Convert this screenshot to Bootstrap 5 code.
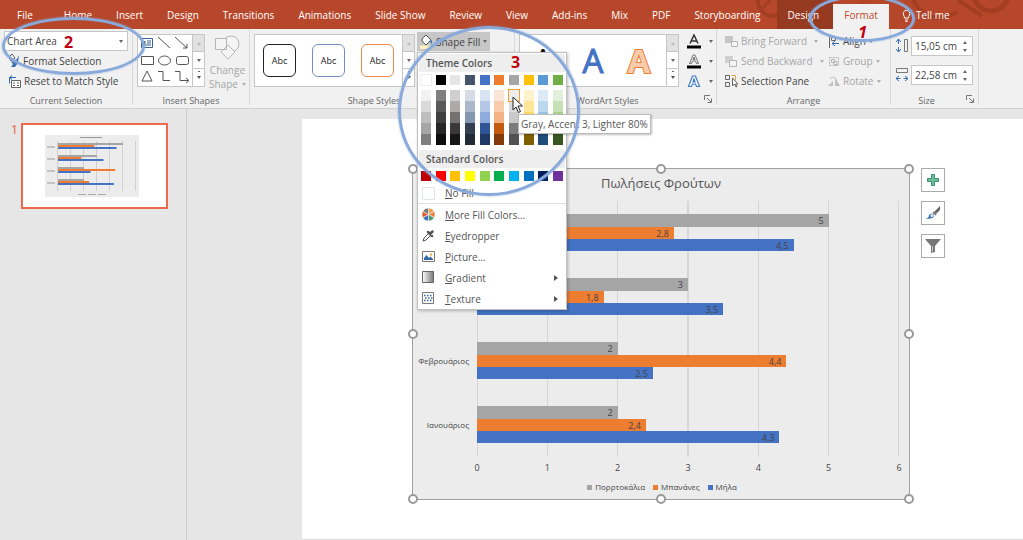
<!DOCTYPE html>
<html lang="en">
<head>
<meta charset="utf-8">
<meta name="viewport" content="width=device-width, initial-scale=1">
<title>Chart formatting</title>
<link href="https://cdn.jsdelivr.net/npm/bootstrap@5.3.0/dist/css/bootstrap.min.css" rel="stylesheet">
<style>
body{font-family:"Open Sans","Noto Sans",sans-serif;font-size:10px;line-height:20px;color:#444;background:#e6e6e6;overflow:hidden}
svg{display:block;flex:none}
button,select,input{font:inherit;color:inherit}
.tabbar{height:29px;background:#b7472a;position:relative}
.tabbar .nav-link{color:#fff;padding:5px 12px 4px;font-size:10px;line-height:20px;white-space:nowrap}
.tabbar .nav{position:relative}
.tabbar .tab-file{padding-left:17px;padding-right:19px}
.tabbar .tab-ctx{background:#973a22;padding-left:11px;padding-right:14px;margin-left:4px}
.tabbar .nav-link.active{background:#f1f1f1;color:#c0492b;margin-top:4px;padding:1px 11px 4px}
.pattern{position:absolute;right:0;top:0}
.ribbon{background:#f1f1f1;border-bottom:1px solid #d2d2d2;height:80px}
.rgroup{position:relative;border-right:1px solid #d9d9d9;padding-top:2px;margin-bottom:4px;height:76px}
.rgroup .body{height:62px}
.caption{font-size:9px;line-height:16px;color:#666;text-align:center}
.w-sel{width:133px}.w-ins{width:117px}.w-sty{width:265px}.w-art{width:202px}.w-arr{width:174px}.w-siz{width:88px}
.arr-col{width:107px}
.cmd{display:flex;align-items:center;border:0;background:none;padding:0;height:20px;gap:3px;color:#444;white-space:nowrap}
.cmd.off{color:#a6a6a6}
.caret{width:0;height:0;border:2px solid transparent;border-top:3px solid #666;border-bottom:0;flex:none}
.off .caret{border-top-color:#b0b0b0}
.combo{position:relative;width:124px}
.combo select{display:block;appearance:none;width:100%;height:20px;border:1px solid #c6c6c6;background:#fff;padding:0 2px;border-radius:0;line-height:18px}
.combo .caret{position:absolute;right:5px;top:9px}
.gallery{display:flex;border:1px solid #c6c6c6;background:#fff;height:53px;margin-top:3px}
.gscroll{width:12px;display:grid;grid-template-rows:repeat(3,1fr);border-left:1px solid #c6c6c6}
.gscroll button{border:0;border-bottom:1px solid #c6c6c6;background:#fff;padding:0;display:grid;place-items:center}
.gscroll button:first-child{background:#e1e1e1}
.gscroll button:last-child{border-bottom:0}
.gscroll .up{transform:rotate(180deg);border-top-color:#bbb}
.gscroll .more{border-top-color:#555;box-shadow:0 -5px 0 -1px #fff,0 -6px 0 -1px #666}
.abc{width:33px;height:33px;border:1px solid #222;border-radius:6px;background:#fff;font-size:9px;color:#222;padding:0}
.abc.b{border-color:#6f8fc4}.abc.o{border-color:#ec8a50}
.wa-row{padding:0 12px 0 8px}
.wa{border:0;background:none;padding:0;font-size:33px;line-height:50px;width:30px}
.wa.k{color:#111}.wa.b{color:#4472c4;-webkit-text-stroke:1px #4472c4}.wa.o{color:#f8cbad;-webkit-text-stroke:2px #ed7d31;font-weight:700;paint-order:stroke}
.fillbtn{background:#c6c6c6;width:73px;height:19px;padding:0 3px;gap:3px}
.fillwrap{position:relative;margin:1px 0 0 2px}
.fillmenu{position:absolute;left:0;top:20px;width:150px;z-index:5;background:#fff;border:1px solid #c0c0c0;box-shadow:1px 1px 3px rgba(0,0,0,.25);padding:1px 0 0}
.fillmenu h6{font-size:10px;line-height:18px;font-weight:600;color:#555;background:#eee;margin:0 1px;padding-left:7px}
.fillmenu .h-std{margin-top:5px}
.sw{display:flex;justify-content:space-between;padding:0 3px}
.sw button{border:0;padding:0;width:10px;height:10px;display:block}
.sw .pale{box-shadow:0 0 0 1px #eee}
.sw .shade button{height:11px}
.sw .hot{outline:1px solid #f0a030}
.swbase{margin:3px 0 5px}
.swstd{margin:3px 0 2px}
.mi{display:flex;align-items:center;width:100%;border:0;background:none;height:21px;padding:0 8px 0 4px;color:#555;text-align:left}
.mi svg{margin-right:10px}
.mi u{text-underline-offset:1px}
.mi .arr{margin-left:auto;border:3px solid transparent;border-left:4px solid #555;border-right:0}
.tip{position:absolute;left:101px;top:82px;z-index:6;background:#fff;border:1px solid #bbb;box-shadow:1px 1px 2px rgba(0,0,0,.25);padding:0 2px;line-height:18px;white-space:nowrap;color:#555}
.cursor{position:absolute;left:95px;top:64px;z-index:7}
.ring{position:absolute;border:3px solid #88a9da;border-radius:50%;box-shadow:0 0 2px #88a9da;pointer-events:none;z-index:8}
.ring-sel{left:2px;top:-12px;width:143px;height:58px}
.ring-fill{left:-19px;top:-6px;width:182px;height:170px}
.ring-tab{left:-24px;top:-5px;width:106px;height:47px}
.num{position:absolute;color:#c00010;font-weight:700;font-size:16px;line-height:20px;z-index:9}
.num-sel{left:64px;top:3px}.num-fill{left:94px;top:20px}.num-tab{left:25px;top:22px;font-style:italic}
.dim{position:relative;gap:2px;width:78px}
.dim input{width:62px;height:20px;border:1px solid #c6c6c6;background:#fff;padding:0 3px;border-radius:0}
.spin{position:absolute;right:6px;top:5px;display:grid;gap:5px}
.spin .up{transform:rotate(180deg)}
.launch{position:absolute;right:4px;bottom:0;border:0;background:none;padding:0}
.side{width:187px;border-right:1px solid #cbcbcb;padding:14px 0 0 11px}
.side .no{color:#e0593a;font-size:12px;line-height:14px;width:10px}
.thumb{width:147px;height:86px;border:2px solid #ee6a4c;background:#fff;display:grid;place-items:center;padding-right:6px}
.slide{margin:10px 0 1px 115px;background:#fff;padding:49px 78px 39px 110px;border-bottom:1px solid #ddd;gap:11px}
.chartbox{position:relative;background:#ececec;border:1px solid #a0a0a0;height:332px;color:#444;font-size:9px}
.chartbox h5{font-size:13px;line-height:29px;margin:0 0 3px;text-align:center;font-weight:400;color:#555}
.cats{width:64px;font-size:8px;text-align:right;padding-right:8px}
.cats div{height:64px;line-height:64px}
.plot{margin-right:10px;height:256px;background:repeating-linear-gradient(90deg,#d6d6d6 0 1px,transparent 1px calc((100% - 1px)/6))}
.cluster{height:64px;padding-top:13px}
.cluster div{height:13px;line-height:13px;text-align:right;padding-right:5px}
.cluster div+div{height:12px}
.s0{background:#a5a5a5}.s1{background:#ed7d31}.s2{background:#4472c4}
.axis{margin:0 4px 0 58px;display:flex;justify-content:space-between;line-height:22px}
.axis span{width:12px;text-align:center}
.legend-row{font-size:8px;line-height:16px;padding-left:2px}
.legend-row i{width:5px;height:5px;margin-right:3px}
.handle{position:absolute;width:10px;height:10px;border:2px solid #999;border-radius:50%;background:#fff;transform:translate(-50%,-50%)}
.tools{width:24px;gap:9px}
.tools button{width:24px;height:24px;border:1px solid #aaa;background:#fff;padding:0;display:grid;place-items:center}
</style>
</head>
<body class="d-flex flex-column min-vh-100">
<header class="tabbar">
<svg class="pattern" width="290" height="29" fill="none" stroke="#96381f" stroke-opacity=".6"><circle cx="40" cy="1" r="15" stroke-width="4"/><path d="M30 8l12-14M78 0l20 15h20l14-12" stroke-width="3"/><circle cx="258" cy="-6" r="17" stroke-width="5"/><path d="M180 0q16 28 44 12M225 0l24 16" stroke-width="4"/></svg>
<nav class="nav flex-nowrap">
<a class="nav-link tab-file" href="#">File</a><a class="nav-link" href="#">Home</a><a class="nav-link" href="#">Insert</a><a class="nav-link" href="#">Design</a><a class="nav-link" href="#">Transitions</a><a class="nav-link" href="#">Animations</a><a class="nav-link" href="#">Slide Show</a><a class="nav-link" href="#">Review</a><a class="nav-link" href="#">View</a><a class="nav-link" href="#">Add-ins</a><a class="nav-link" href="#">Mix</a><a class="nav-link" href="#">PDF</a><a class="nav-link" href="#">Storyboarding</a><a class="nav-link tab-ctx" href="#">Design</a>
<div class="position-relative"><a class="nav-link active" href="#">Format</a><span class="ring ring-tab"></span><span class="num num-tab">1</span></div>
<a class="nav-link d-flex align-items-center gap-1" href="#"><svg width="11" height="13" viewBox="0 0 11 13" fill="none" stroke="#fff"><path d="M3.500 9Q3.500 7.500 2.500 6A3.300 3.300 0 1 1 8.500 6Q7.500 7.500 7.500 9ZM4 11h3M4.500 12.500h2"/></svg>Tell me</a>
</nav>
</header>
<section class="ribbon d-flex">
<div class="rgroup w-sel">
<div class="body ps-1">
<div class="combo"><select aria-label="Chart element"><option>Chart Area</option></select><span class="caret"></span></div>
<button class="cmd ps-1"><svg width="12" height="14" viewBox="0 0 12 14"><path d="M1 3l3-3 3 4-4 3z" fill="#fff" stroke="#555"/><path d="M3 8l6-3 2-4-1 8-3 4H3l2-3z" fill="#3f6fae"/></svg>Format Selection</button>
<button class="cmd ps-1"><svg width="13" height="13" viewBox="0 0 13 13" fill="none"><path d="M3.500 5.500h9v7h-9z" stroke="#666" fill="#fff"/><path d="M5 8h2M9 8h2M5 10.500h2M9 10.500h2" stroke="#666"/><path d="M8 2.500H2M4 .5l-2.500 2L4 4.500M1.500 2.500v6" stroke="#2f6bb0"/></svg>Reset to Match Style</button>
</div>
<div class="caption">Current Selection</div>
<span class="ring ring-sel"></span><span class="num num-sel">2</span>
</div>
<div class="rgroup w-ins">
<div class="body d-flex ps-1">
<div class="gallery"><svg width="54" height="51" fill="none" stroke="#555"><path d="M3.500 3.500h11v9h-11zM9 6h4M9 8h4M5 10h8" stroke="#3b5f8f"/><path d="M5 7.500h2.500" stroke-width="3"/><path d="M20 2l12 11M37 2l12 11M49 9v4h-4M3.500 21.500h12v8h-12zM4 46l5-10 5 10zM20 36.500h5v9h7M37 36.500h5v9h8M48 43l3 2.500-3 2.500"/><ellipse cx="26.500" cy="25.500" rx="6" ry="4.500"/><rect x="38.500" y="21.500" width="12" height="8" rx="2"/></svg><div class="gscroll"><button aria-label="Up"><span class="caret up"></span></button><button aria-label="Down"><span class="caret"></span></button><button aria-label="More"><span class="caret more"></span></button></div></div>
<button class="cmd off d-block h-auto lh-1 ps-1"><svg class="mx-auto mb-1" width="26" height="26" viewBox="0 0 26 26" fill="#f4f4f4" stroke="#b5b5b5"><circle cx="17" cy="9" r="8"/><path d="M1.500 3.500h11v11h-11zM7 17l7-7 7 7-7 7z"/></svg>Change<br><span class="d-flex align-items-center justify-content-center gap-1 pt-1">Shape <span class="caret"></span></span></button>
</div>
<div class="caption">Insert Shapes</div>
</div>
<div class="rgroup w-sty">
<div class="body d-flex ps-1">
<div class="gallery"><div class="d-flex align-items-center justify-content-between px-2"><button class="abc me-3">Abc</button><button class="abc b me-3">Abc</button><button class="abc o">Abc</button></div><div class="gscroll"><button aria-label="Up"><span class="caret up"></span></button><button aria-label="Down"><span class="caret"></span></button><button aria-label="More"><span class="caret more"></span></button></div></div>
<div class="fillwrap">
<button class="cmd fillbtn"><svg width="13" height="15" viewBox="0 0 13 15"><path d="M2 5l4-4 5 5-5 5-4-4z" fill="#fff" stroke="#555"/><path d="M10 5q3 2 1.500 5-1.500-1-1.500-5z" fill="#3f6fae"/><path d="M0 11.500h12V15H0z" fill="#fff2bd"/></svg>Shape Fill<span class="caret"></span></button>
<div class="fillmenu">
<h6>Theme Colors</h6>
<div class="sw swbase" id="base"></div>
<div class="sw" id="shades"></div>
<h6 class="h-std">Standard Colors</h6>
<div class="sw swstd" id="std"></div>
<button class="mi border-bottom"><svg width="13" height="13"><path d="M.5.5h12v12H.5z" fill="#fff" stroke="#dde3e8"/></svg><span><u>N</u>o Fill</span></button>
<button class="mi"><svg width="13" height="13" viewBox="-7 -7 14 14" stroke="#fff" stroke-width=".6"><path d="M0 0L0-7A7 7 0 0 1 6.100-3.500z" fill="#f0a04b"/><path d="M0 0L6.100-3.500A7 7 0 0 1 6.100 3.500z" fill="#e8813a"/><path d="M0 0L6.100 3.500A7 7 0 0 1 0 7z" fill="#4a9a76"/><path d="M0 0L0 7A7 7 0 0 1-6.100 3.500z" fill="#3c70b4"/><path d="M0 0L-6.100 3.500A7 7 0 0 1-6.100-3.500z" fill="#e05a3a"/><path d="M0 0L-6.100-3.500A7 7 0 0 1 0-7z" fill="#777"/></svg><span><u>M</u>ore Fill Colors...</span></button>
<button class="mi"><svg width="13" height="13" viewBox="0 0 13 13"><path d="M1 12l1-3 5-5 2 2-5 5z" fill="#fff" stroke="#555"/><path d="M6 3l4 4M8 5l2.500-2.500" stroke="#555" stroke-width="2.500" stroke-linecap="round"/></svg><span><u>E</u>yedropper</span></button>
<button class="mi"><svg width="13" height="13"><path d="M.5 1.500h12v10H.5z" fill="#fff" stroke="#777"/><path d="M2 10V8l2.500-3L7 8l1.500-1.500L11 9v1z" fill="#3568a8"/><circle cx="9" cy="4.500" r="1.200" fill="#f0b040"/></svg><span><u>P</u>icture...</span></button>
<button class="mi"><svg width="13" height="13"><defs><linearGradient id="g"><stop stop-color="#fff"/><stop offset="1" stop-color="#777"/></linearGradient></defs><path d="M.5.5h11v11H.5z" fill="url(#g)" stroke="#666"/></svg><span><u>G</u>radient</span><span class="arr"></span></button>
<button class="mi"><svg width="13" height="13"><path d="M.5.5h11v11H.5z" fill="#fff" stroke="#777"/><path d="M2 3.500h8M3 6h8M2 8.500h8" stroke="#3568a8" stroke-width="1.500" stroke-dasharray="1.500 1.500"/></svg><span><u>T</u>exture</span><span class="arr"></span></button>
</div>
<div class="tip">Gray, Accent 3, Lighter 80%</div>
<svg class="cursor" width="12" height="18" viewBox="0 0 12 18"><path d="M1 1v13l3-3 2.500 5.500 2-1L6 10h4.500z" fill="#fff" stroke="#222"/></svg>
<span class="ring ring-fill"></span><span class="num num-fill">3</span>
</div>
</div>
<div class="caption pe-3">Shape Styles</div>
</div>
<div class="rgroup w-art">
<div class="body d-flex ps-1 gap-2">
<div class="gallery"><div class="d-flex wa-row gap-3"><button class="wa k">A</button><button class="wa b ms-1">A</button><button class="wa o">A</button></div><div class="gscroll"><button aria-label="Up"><span class="caret up"></span></button><button aria-label="Down"><span class="caret"></span></button><button aria-label="More"><span class="caret more"></span></button></div></div>
<div>
<button class="cmd gap-2" aria-label="Text Fill"><svg width="14" height="15" fill="none" stroke="#333" stroke-width="1.500"><path d="M3 9.500L7 1l4 8.500M4.500 7h5"/><path d="M0 13h14" stroke="#000" stroke-width="3"/></svg><span class="caret"></span></button>
<button class="cmd gap-2" aria-label="Text Outline"><svg width="14" height="15" fill="none" stroke="#777"><path d="M2.500 9.500L6 1h2l3.500 8.500h-2l-1-2.500h-3l-1 2.500zM6 5.500h2L7 3z"/><path d="M0 13h14" stroke="#000" stroke-width="3"/></svg><span class="caret"></span></button>
<button class="cmd gap-2" aria-label="Text Effects"><svg width="14" height="15" fill="#fff" stroke="#3f7cc4" stroke-width="1.200"><path d="M1.500 12.500L5.500 2h3l4 10.500h-3l-1-2.500h-3l-1 2.500zM6 8h2L7 5z"/></svg><span class="caret"></span></button>
</div>
</div>
<div class="caption pe-3">WordArt Styles</div>
<button class="launch" aria-label="WordArt options"><svg width="8" height="12" fill="none" stroke="#777"><path d="M.5 7V2.500H6M3 5l4 4M7.500 5.500v4h-4"/></svg></button>
</div>
<div class="rgroup w-arr">
<div class="body d-flex ps-1">
<div class="arr-col ps-1">
<button class="cmd off"><svg width="13" height="13"><path d="M0 1h8v7H0z" fill="#c6c6c6"/><path d="M6.500 6.500h6v5h-6z" fill="#f4f4f4" stroke="#b5b5b5"/></svg>Bring Forward<span class="caret ms-1"></span></button>
<button class="cmd off"><svg width="13" height="13"><path d="M0 1h8v7H0z" fill="#d0d0d0"/><path d="M4.500 5.500h7v6h-7z" fill="#f4f4f4" stroke="#b5b5b5"/></svg>Send Backward<span class="caret ms-1"></span></button>
<button class="cmd"><svg width="13" height="14" fill="none" stroke="#666"><path d="M.5 1.500h4v4h-4zM.5 8.500h4v4h-4z"/><path d="M6.500 1.500h4v5" stroke="#e5a44c"/><path d="M7.500 4v8l2-2 1.500 3 1-.5-1.500-2.500H13z" fill="#fff"/></svg>Selection Pane</button>
</div>
<div>
<button class="cmd"><svg width="12" height="13" fill="none" stroke="#666"><path d="M1.500 0v13M3.500 2.500h4v3h-4z"/><path d="M11 8.500H5M7 6l-3 2.500L7 11" stroke="#2f6bb0"/></svg>Align<span class="caret"></span></button>
<button class="cmd off"><svg width="12" height="13" fill="none" stroke="#b0b0b0"><path d="M1.500 2.500h9v8h-9z" stroke-dasharray="2 1"/><path d="M3.500 4.500h3v3h-3zM6 6.500h3v3H6z"/></svg>Group<span class="caret"></span></button>
<button class="cmd off"><svg width="12" height="13" fill="#c0c0c0"><path d="M0 11l5-5v5zM7 2v9h5z"/><path d="M2 4q2-3 5-1" fill="none" stroke="#c0c0c0"/></svg>Rotate<span class="caret"></span></button>
</div>
</div>
<div class="caption">Arrange</div>
</div>
<div class="rgroup w-siz">
<div class="body d-grid ps-1 pb-1 align-content-around">
<label class="dim d-flex align-items-center"><svg width="14" height="15" fill="none" stroke="#2f6bb0"><path d="M3.500 1v13M1 4l2.500-3L6 4M1 11l2.500 3L6 11"/><path d="M2 7.500h3" stroke="#f1f1f1" stroke-width="3"/><path d="M9.500 1.500h3v12h-3z" stroke="#777"/></svg><input aria-label="Height" value="15,05 cm"><span class="spin"><span class="caret up"></span><span class="caret"></span></span></label>
<label class="dim d-flex align-items-center"><svg width="14" height="15" fill="none" stroke="#2f6bb0"><path d="M1 11.500h12M4 9l-3 2.500L4 14M10 9l3 2.500-3 2.500"/><path d="M7 10v3" stroke="#f1f1f1" stroke-width="3"/><path d="M1.500 1.500h11v4h-11z" stroke="#777"/></svg><input aria-label="Width" value="22,58 cm"><span class="spin"><span class="caret up"></span><span class="caret"></span></span></label>
</div>
<div class="caption pe-3">Size</div>
<button class="launch" aria-label="Size options"><svg width="8" height="12" fill="none" stroke="#777"><path d="M.5 7V2.500H6M3 5l4 4M7.500 5.500v4h-4"/></svg></button>
</div>
</section>
<main class="d-flex flex-grow-1">
<aside class="side d-flex flex-shrink-0 align-items-start"><span class="no">1</span>
<div class="thumb"><svg id="mini" width="94" height="62" viewBox="0 0 94 62"><path d="M0 0h94v62H0z" fill="#ececec"/></svg></div>
</aside>
<section class="slide d-flex flex-grow-1 align-items-start">
<div class="chartbox flex-grow-1">
<h5>Πωλήσεις Φρούτων</h5>
<div class="d-flex"><div class="cats" id="cats"></div><div class="plot flex-grow-1" id="plot"></div></div>
<div class="axis"><span>0</span><span>1</span><span>2</span><span>3</span><span>4</span><span>5</span><span>6</span></div>
<div class="legend-row d-flex justify-content-center gap-2"><span class="d-flex align-items-center"><i class="s0"></i>Πορρτοκάλια</span><span class="d-flex align-items-center"><i class="s1"></i>Μπανάνες</span><span class="d-flex align-items-center"><i class="s2"></i>Μήλα</span></div>
<span class="handle top-0 start-0"></span><span class="handle top-0 start-50"></span><span class="handle top-0 start-100"></span><span class="handle top-50 start-0"></span><span class="handle top-50 start-100"></span><span class="handle top-100 start-0"></span><span class="handle top-100 start-50"></span><span class="handle top-100 start-100"></span>
</div>
<div class="tools d-flex flex-column flex-shrink-0">
<button aria-label="Chart Elements"><svg width="14" height="14"><path d="M5.500 1.500h3v4h4v3h-4v4h-3v-4h-4v-3h4z" fill="#6cbf9b" stroke="#3f8f6c"/></svg></button>
<button aria-label="Chart Styles"><svg width="16" height="16"><path d="M15 1v4l-4 4-2-2z" fill="#666"/><path d="M8 7l3 3" stroke="#666" stroke-width="1.500"/><path d="M0 14q4-1 4-4 3-3 5 0 1 4-9 4z" fill="#3f78b8"/><circle cx="7" cy="10.500" r="1.500" fill="#d7e6f5"/></svg></button>
<button aria-label="Chart Filters"><svg width="16" height="16"><path d="M0 1h16l-6 7v6l-4 1V8z" fill="#777"/><path d="M7.500 8v5.500" stroke="#ccc"/></svg></button>
</div>
</section>
</main>
<script src="https://cdn.jsdelivr.net/npm/bootstrap@5.3.0/dist/js/bootstrap.bundle.min.js"></script>
<script>
const $ = id => document.getElementById(id);
const sw = (c, cls = '') => `<button class="${cls}" style="background:${c}" aria-label="${c}"></button>`;
const base = ['#fff','#000','#e7e6e6','#44546a','#4472c4','#ed7d31','#a5a5a5','#ffc000','#5b9bd5','#70ad47'];
const shades = [
 ['#f2f2f2','#d9d9d9','#bfbfbf','#a6a6a6','#7f7f7f'],['#7f7f7f','#595959','#404040','#262626','#0d0d0d'],
 ['#d0cece','#aeaaaa','#757171','#3a3838','#161616'],['#d6dce5','#adb9ca','#8497b0','#333f50','#222a35'],
 ['#dae3f3','#b4c7e7','#8faadc','#2f5597','#203864'],['#fbe5d6','#f8cbad','#f4b183','#c55a11','#843c0c'],
 ['#ededed','#dbdbdb','#c9c9c9','#7c7c7c','#525252'],['#fff2cc','#ffe699','#ffd966','#bf9000','#7f6000'],
 ['#deebf7','#bdd7ee','#9dc3e6','#2e75b6','#1f4e79'],['#e2f0d9','#c5e0b4','#a9d18e','#548235','#385723']];
$('base').innerHTML = base.map((c, i) => sw(c, i ? '' : 'pale')).join('');
$('shades').innerHTML = shades.map((col, i) => `<div class="shade">${col.map((c, j) => sw(c, i === 6 && !j ? 'hot' : '')).join('')}</div>`).join('');
$('std').innerHTML = ['#c00000','#f00','#ffc000','#ff0','#92d050','#00b050','#00b0f0','#0070c0','#002060','#7030a0'].map(c => sw(c)).join('');
// The open menu covers the first two category names.
const data = [['',5,2.8,4.5],['',3,1.8,3.5],['Φεβρουάριος',2,4.4,2.5],['Ιανουάριος',2,2.4,4.3]];
const max = 6, fill = ['#a5a5a5','#ed7d31','#4472c4'];
$('cats').innerHTML = data.map(d => `<div>${d[0]}</div>`).join('');
$('plot').innerHTML = data.map(d => `<div class="cluster">${d.slice(1).map((v, s) => `<div class="s${s}" style="width:${v / max * 100}%">${String(v).replace('.', ',')}</div>`).join('')}</div>`).join('');
let m = '<path d="M35 2.500h22" stroke="#999"/><path d="M33 59.500h30" stroke="#aaa" stroke-dasharray="8 2"/>';
for (let i = 0; i <= max; i++) m += `<path d="M${12.5 + i * 13} 6v50" stroke="#d0d0d0"/>`;
data.forEach((d, k) => { m += `<path d="M2 ${12 + k * 12}h8" stroke="#999"/>`; d.slice(1).forEach((v, s) => m += `<rect x="13" y="${8 + k * 12 + s * 2}" width="${v * 13}" height="2" fill="${fill[s]}"/>`); });
$('mini').insertAdjacentHTML('beforeend', m);
</script>
</body>
</html>
